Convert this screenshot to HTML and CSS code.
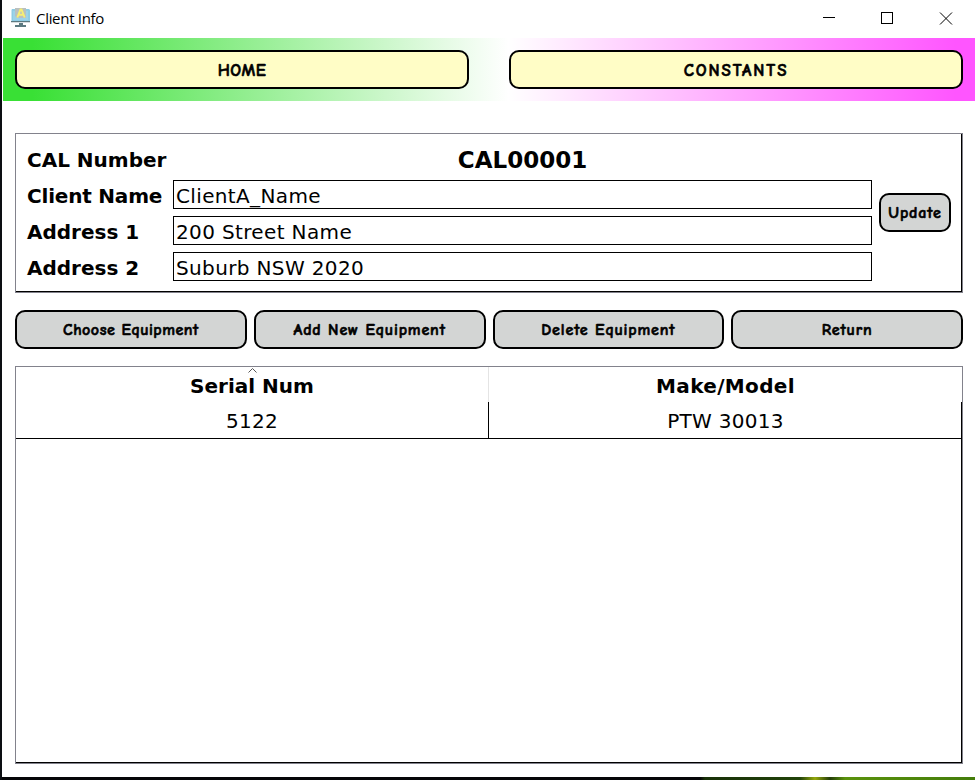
FILE: index.html
```
<!DOCTYPE html>
<html lang="en">
<head>
<meta charset="utf-8">
<title>Client Info</title>
<link rel="stylesheet" href="styles.css">
</head>
<body>
<main class="window">
  <header class="titlebar">
    <svg class="app-icon" width="20" height="20" viewBox="0 0 20 20">
      <path fill="#8fcce4" d="M1 1h17l1 1v12H.5V2z"/>
      <path fill="#9dd3e8" d="M2 3h15v9H2z"/>
      <path fill="#b9c0bf" d="M4 0h11v10H6L4 8z"/>
      <path fill="#5c7980" d="M0 13h19v1.3H0zM8 15h4v2h3v2H4v-2h4z"/>
      <path fill="none" stroke="#f6ee75" stroke-width="2" d="M6.300 9.500 9.500 1.500h1L13.700 9.500M7.500 6.800h5"/>
    </svg>
    <span class="title">Client Info</span>
    <svg class="controls" width="130" height="13" viewBox="0 0 130 13" fill="none" stroke="#000" shape-rendering="crispEdges">
      <path d="M0 5.5h12M58.500 .5h11v11h-11z"/>
      <path d="M117 .5l12 12M129 .5l-12 12" shape-rendering="auto"/>
    </svg>
  </header>
  <nav class="nav">
    <button class="btn nav-btn home">HOME</button>
    <button class="btn nav-btn constants">CONSTANTS</button>
  </nav>
  <section class="frame client">
    <div class="fields">
      <span class="label">CAL Number</span><strong class="cal">CAL00001</strong>
      <label class="label name" for="name">Client Name</label><input id="name" value="ClientA_Name">
      <label class="label" for="a1">Address 1</label><input id="a1" value="200 Street Name">
      <label class="label" for="a2">Address 2</label><input id="a2" value="Suburb NSW 2020">
    </div>
    <button class="btn update">Update</button>
  </section>
  <div class="actions">
    <button class="btn choose">Choose Equipment</button>
    <button class="btn">Add New Equipment</button>
    <button class="btn">Delete Equipment</button>
    <button class="btn">Return</button>
  </div>
  <section class="frame list">
    <div class="row head">
      <div class="cell"><svg class="sort" width="9" height="5" viewBox="0 0 9 5"><path d="M.5 4.5l4-4 4 4" fill="none" stroke="#555"/></svg>Serial Num</div>
      <div class="cell model">Make/Model</div>
    </div>
    <div class="row data">
      <div class="cell">5122</div>
      <div class="cell">PTW 30013</div>
    </div>
  </section>
</main>
<div class="desktop"></div>
</body>
</html>
```
FILE: styles.css
```
* { box-sizing: border-box; }
body {
  margin: 0;
  height: 780px;
  overflow: hidden;
  background: #fff;
  color: #000;
  border-left: 2px solid #0c0e12;
  font: 20px "DejaVu Sans", Verdana, sans-serif;
}
.window { height: 777px; padding-left: 1px; }
.titlebar { height: 38px; display: flex; align-items: center; padding: 0 22px 2px 8px; }
.app-icon { margin-right: 5px; }
.title { font: 15px "Open Sans", "Noto Sans", sans-serif; letter-spacing: -0.3px; }
.controls { margin-left: auto; }
.nav {
  height: 63px;
  padding: 12px;
  display: flex;
  gap: 40px;
  background: linear-gradient(90deg, #39e035 0, #39e035 3%, #fff 52%, #ff55ff 98%);
}
.btn {
  flex: 1 1 0;
  height: 39px;
  padding: 1px 0 0;
  border: 2px solid #000;
  border-radius: 10px;
  background: #d3d5d4;
  color: #000;
  font: bold 16px "Comic Sans MS", "Comic Neue", Lato, sans-serif;
  letter-spacing: 0.85px;
  -webkit-text-stroke: 0.6px #000;
  white-space: nowrap;
}
.choose { letter-spacing: 0.5px; }
.nav-btn { background: #fffdc6; }
.home { font-size: 17px; letter-spacing: 0.6px; }
.constants { font-size: 17px; letter-spacing: 1.9px; }
.frame {
  margin: 0 12px;
  border: 1px solid #82828c;
  box-shadow: inset -1px -1px 0 #000;
}
.client { margin-top: 32px; height: 160px; display: flex; align-items: center; padding: 0 11px; gap: 7px; }
.fields {
  flex: 1;
  display: grid;
  grid-template-columns: 146px 1fr;
  grid-template-rows: 29px 29px 29px 29px;
  row-gap: 7px;
  align-items: center;
  padding-bottom: 2px;
}
.label { font-weight: bold; padding-top: 4px; }
.name { letter-spacing: -0.2px; }
.cal { justify-self: center; font-size: 23px; padding-top: 3px; }
input {
  width: 100%;
  height: 29px;
  padding: 3px 2px 0;
  border: 1px solid #000;
  background: #fff;
  color: #000;
  font: inherit;
  letter-spacing: 0.36px;
  outline: none;
}
.update { flex: 0 0 72px; margin-bottom: 2px; }
.actions { margin: 17px 12px; display: flex; gap: 7px; }
.list { height: 398px; }
.row { display: flex; }
.cell { flex: 1 1 0; text-align: center; }
.row .cell:first-child { flex: 0 0 472px; }
.head { height: 35px; font-weight: bold; line-height: 38px; background: #fff; }
.head .cell + .cell { border-left: 1px solid #e4e4e4; }
.head .cell { position: relative; }
.model { letter-spacing: 0.35px; }
.sort { position: absolute; top: 1px; left: calc(50% - 4px); }
.data { height: 37px; line-height: 39px; letter-spacing: 0.3px; border-bottom: 1px solid #000; }
.data .cell + .cell { border-left: 1px solid #000; }
.desktop { height: 3px; margin-left: -2px; background: linear-gradient(90deg, #050507 0 700px, #183008 705px, #214309 800px, #94a80d 815px, #233d08 830px, #5a920c 845px, #437c0a 100%); }
```
